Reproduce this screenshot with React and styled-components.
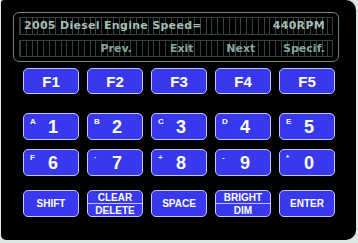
import React from 'react'
import styled, { createGlobalStyle } from 'styled-components'

const Global = createGlobalStyle`
  html, body {
    margin: 0;
    padding: 0;
    background: #dce8e6;
  }
  body {
    font-family: "DejaVu Sans", Verdana, sans-serif;
  }
`

const Panel = styled.div`
  box-sizing: border-box;
  width: 355px;
  height: 240px;
  margin-left: 1px;
  padding: 12px 0 0 12px;
  background: #000;
  border-radius: 3px 10px 10px 5px;
`

const Display = styled.div`
  box-sizing: border-box;
  width: 326px;
  height: 50px;
  padding: 4px 5px;
  border: 1px solid #6f8a82;
  border-radius: 6px;
  display: flex;
  flex-direction: column;
  gap: 5px;
`

const LcdRow = styled.div`
  box-sizing: border-box;
  height: 18px;
  border: 1px solid #34433e;
  background: repeating-linear-gradient(
    to right,
    #34433e 0 1px,
    transparent 1px 5.8px
  );
  display: flex;
  align-items: center;
  justify-content: ${p => (p.$spread ? 'flex-end' : 'space-between')};
  padding: 0 7px 0 4px;
  color: ${p => p.$dim ? '#8aa69e' : '#a4beb6'};
  font-size: 11px;
  font-weight: bold;
  letter-spacing: ${p => p.$dim ? '0' : '0.3px'};
  white-space: nowrap;
`

const SoftKey = styled.span`
  width: ${p => p.$w}px;
  text-align: right;
`

const Keypad = styled.div`
  margin: 6px 0 0 10px;
  display: flex;
  flex-direction: column;
`

const Row = styled.div`
  display: flex;
  gap: 8px;
  margin-top: ${p => p.$top || 0}px;
`

const Key = styled.div`
  box-sizing: border-box;
  position: relative;
  width: 56px;
  height: ${p => p.$h || 27}px;
  background: #3838ef;
  border: 1px solid #c4c4ff;
  border-radius: 5px;
  color: #fff;
  font-family: "Liberation Sans", Arial, sans-serif;
  font-weight: bold;
  display: flex;
  align-items: center;
  justify-content: center;
  font-size: ${p => p.$size || 15}px;
`

const Sub = styled.span`
  position: absolute;
  left: 6px;
  top: 3px;
  font-size: 8px;
`

const Digit = styled.span`
  margin-left: 4px;
  margin-top: 2px;
`

const Split = styled(Key)`
  flex-direction: column;
  font-size: 10px;
`

const Half = styled.div`
  flex: 1;
  width: 100%;
  display: flex;
  align-items: center;
  justify-content: center;
  & + & {
    border-top: 1px solid #c4c4ff;
  }
`

const fKeys = ['F1', 'F2', 'F3', 'F4', 'F5']
const numRow1 = [['A', '1'], ['B', '2'], ['C', '3'], ['D', '4'], ['E', '5']]
const numRow2 = [['F', '6'], ['·', '7'], ['+', '8'], ['-', '9'], ['*', '0']]

export default function App() {
  return (
    <>
      <Global />
      <Panel>
        <Display>
          <LcdRow>
            <span>2005 Diesel Engine Speed=</span>
            <span>440RPM</span>
          </LcdRow>
          <LcdRow $spread $dim>
            <SoftKey $w={110}>Prev.</SoftKey>
            <SoftKey $w={63}>Exit</SoftKey>
            <SoftKey $w={63}>Next</SoftKey>
            <SoftKey $w={71}>Specif.</SoftKey>
          </LcdRow>
        </Display>
        <Keypad>
          <Row>
            {fKeys.map(k => (
              <Key key={k} $h={26} $size={15}>{k}</Key>
            ))}
          </Row>
          <Row $top={19}>
            {numRow1.map(([s, d]) => (
              <Key key={d} $size={18}>
                <Sub>{s}</Sub>
                <Digit>{d}</Digit>
              </Key>
            ))}
          </Row>
          <Row $top={9}>
            {numRow2.map(([s, d]) => (
              <Key key={d} $size={18}>
                <Sub>{s}</Sub>
                <Digit>{d}</Digit>
              </Key>
            ))}
          </Row>
          <Row $top={14}>
            <Key $size={10}>SHIFT</Key>
            <Split>
              <Half>CLEAR</Half>
              <Half>DELETE</Half>
            </Split>
            <Key $size={10}>SPACE</Key>
            <Split>
              <Half>BRIGHT</Half>
              <Half>DIM</Half>
            </Split>
            <Key $size={10}>ENTER</Key>
          </Row>
        </Keypad>
      </Panel>
    </>
  )
}
